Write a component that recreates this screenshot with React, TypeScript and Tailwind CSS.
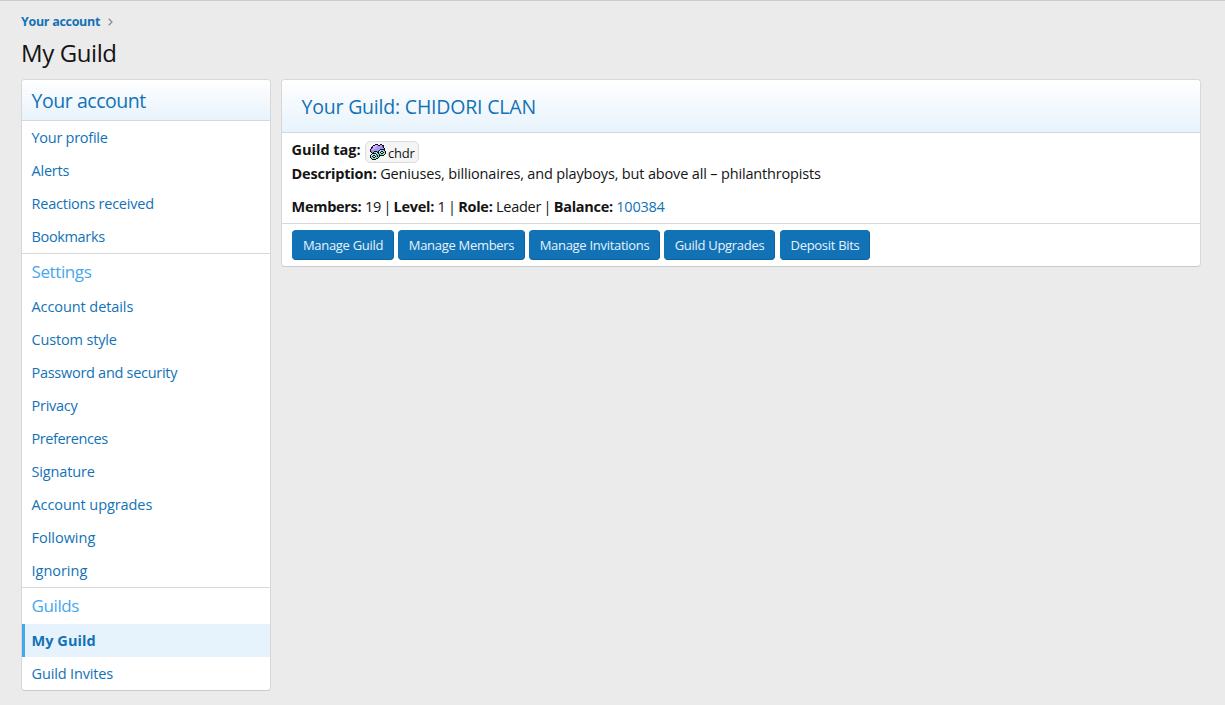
import clsx from "clsx";

type NavItem = { label: string; tracking: string; active?: boolean };

const accountLinks: NavItem[] = [
  { label: "Your profile", tracking: "tracking-[-0.27px]" },
  { label: "Alerts", tracking: "tracking-[-0.2px]" },
  { label: "Reactions received", tracking: "tracking-[-0.22px]" },
  { label: "Bookmarks", tracking: "tracking-[-0.35px]" },
];

const settingsLinks: NavItem[] = [
  { label: "Account details", tracking: "tracking-[-0.08px]" },
  { label: "Custom style", tracking: "tracking-[-0.15px]" },
  { label: "Password and security", tracking: "tracking-[-0.28px]" },
  { label: "Privacy", tracking: "tracking-[-0.25px]" },
  { label: "Preferences", tracking: "tracking-[-0.4px]" },
  { label: "Signature", tracking: "tracking-[-0.15px]" },
  { label: "Account upgrades", tracking: "tracking-[-0.08px]" },
  { label: "Following", tracking: "tracking-[-0.02px]" },
  { label: "Ignoring", tracking: "tracking-[-0.02px]" },
];

const guildLinks: NavItem[] = [
  { label: "My Guild", tracking: "tracking-[0.05px]", active: true },
  { label: "Guild Invites", tracking: "tracking-[-0.15px]" },
];

const actions = [
  { label: "Manage Guild", size: "w-[102px]" },
  { label: "Manage Members", size: "w-[127px]" },
  { label: "Manage Invitations", size: "w-[131px]" },
  { label: "Guild Upgrades", size: "w-[111px]" },
  { label: "Deposit Bits", size: "ml-px w-[90px]" },
];

// 16x16 sprite, one character per pixel
const sprite = [
  ".....kkk..kk....",
  "...kkllpkkppkk..",
  "..kllllpppppdk..",
  ".kklllppppppdk..",
  ".kpllpppppppppk.",
  "kplpppppppkkkkk.",
  "kpppppppdkwtttk.",
  "kdppkkkdkwtkkttk",
  ".kdkttwkktkwtktk",
  "..kkkkttkttkktwk",
  ".kwttwkttkttttk.",
  "kwtkkttktkkkkk..",
  "ktktwktktk......",
  "kttkktttk.......",
  ".kttttkk........",
  "..kkkk..........",
];

const spriteColors: Record<string, string> = {
  k: "#101018",
  p: "#b294f5",
  l: "#cdb8ff",
  d: "#8468c8",
  t: "#84d8c0",
  w: "#c4f5e6",
};

function CloudIcon() {
  return (
    <svg className="h-4 w-4 shrink-0" viewBox="0 0 16 16" shapeRendering="crispEdges">
      {sprite.map((row, y) =>
        row.split("").map((key, x) =>
          key === "." ? null : <rect fill={spriteColors[key]} height="1" key={`${x}-${y}`} width="1" x={x} y={y} />,
        ),
      )}
    </svg>
  );
}

function NavLinks({ items }: { items: NavItem[] }) {
  return (
    <>
      {items.map((item) => (
        <a
          className={clsx(
            "flex h-[33px] items-center border-l-[3px] pl-[6.5px] text-[14.5px]",
            item.tracking,
            item.active ? "border-[#47a7eb] bg-[#e7f3fc] font-bold" : "border-transparent",
          )}
          href="#"
          key={item.label}
        >
          {item.label}
        </a>
      ))}
    </>
  );
}

function NavHeading({ children }: { children: string }) {
  return (
    <h4 className="flex h-[37px] items-center border-t border-[#d8d8d8] pl-[9.5px] text-[17px] tracking-[-0.4px] text-[#47a7eb]">
      {children}
    </h4>
  );
}

function Pipe() {
  return <span className="-mx-px">|</span>;
}

export default function App() {
  return (
    <div className="min-h-[705px] border-t border-[#cbcbcb] bg-[#ebebeb] px-[21px] font-['Open_Sans','Noto_Sans',sans-serif] text-[14.5px] text-[#141414]">
      <nav className="flex h-[39px] items-center pt-[3px] text-[12.5px] font-bold text-[#1272b6]">
        <a className="tracking-[-0.3px]" href="#">Your account</a>
        <svg className="ml-[8px] h-[8px] w-[5px]" viewBox="0 0 5 8" fill="none" stroke="#8c8c8c" strokeWidth="1.3">
          <path d="m.7.7 3.3 3.3L.7 7.3" />
        </svg>
      </nav>
      <h1 className="h-[39px] text-[24px] leading-[25px] tracking-[-0.4px]">My Guild</h1>

      <div className="flex items-start gap-[10px]">
        <aside className="w-[250px] rounded border border-[#d8d8d8] border-b-[#cbcbcb] bg-white text-[#1272b6]">
          <h3 className="flex h-[41px] items-center rounded-t-[3px] border-b border-[#d8d8d8] bg-gradient-to-b from-white to-[#e7f3fc] pt-[2px] pl-[9.5px] text-[19.5px] tracking-[-0.45px]">
            Your account
          </h3>
          <NavLinks items={accountLinks} />
          <NavHeading>Settings</NavHeading>
          <NavLinks items={settingsLinks} />
          <NavHeading>Guilds</NavHeading>
          <NavLinks items={guildLinks} />
        </aside>

        <main className="w-[920px] rounded border border-[#d8d8d8] border-b-[#cbcbcb] bg-white">
          <h2 className="flex h-[53px] items-center rounded-t-[3px] border-b border-[#d8d8d8] bg-gradient-to-b from-white to-[#e7f3fc] pt-[2px] pl-[19.5px] text-[19.5px] tracking-[-0.2px] text-[#1272b6]">
            Your Guild: CHIDORI CLAN
          </h2>
          <div className="h-[90px] px-[9.5px] pt-[6px]">
            <div className="flex h-[24px]">
              <strong className="w-[69.5px] leading-[22px]">Guild tag:</strong>
              <span className="ml-[4px] mt-[2px] flex h-[22px] w-[54px] items-center rounded-[5px] border border-[#dcdcdc] bg-[#f5f5f5] pl-[4px] text-[13px]">
                <CloudIcon />
                <span className="ml-[2px] pt-[3px] tracking-[-0.25px]">chdr</span>
              </span>
            </div>
            <p className="h-[33px] leading-[22px] tracking-[-0.16px]">
              <strong className="tracking-[-0.2px]">Description:</strong> Geniuses, billionaires, and playboys, but above all – philanthropists
            </p>
            <p className="leading-[22px] tracking-[-0.28px]">
              <strong>Members:</strong> 19 <Pipe /> <strong>Level:</strong> 1 <Pipe /> <strong>Role:</strong> Leader <Pipe />{" "}
              <strong>Balance:</strong> <a className="text-[#1272b6]" href="#">100384</a>
            </p>
          </div>
          <div className="flex h-[43px] gap-[4px] border-t border-[#d8d8d8] px-[10px] pt-[6px]">
            {actions.map((action) => (
              <button
                className={clsx(
                  "h-[30px] rounded border border-[#1272b6] border-r-[#0f629d] border-b-[#0f629d] bg-[#1272b6] pt-[2px] text-[13px] tracking-[-0.3px] whitespace-nowrap text-[#e7f3fc]",
                  action.size,
                )}
                key={action.label}
              >
                {action.label}
              </button>
            ))}
          </div>
        </main>
      </div>
    </div>
  );
}
